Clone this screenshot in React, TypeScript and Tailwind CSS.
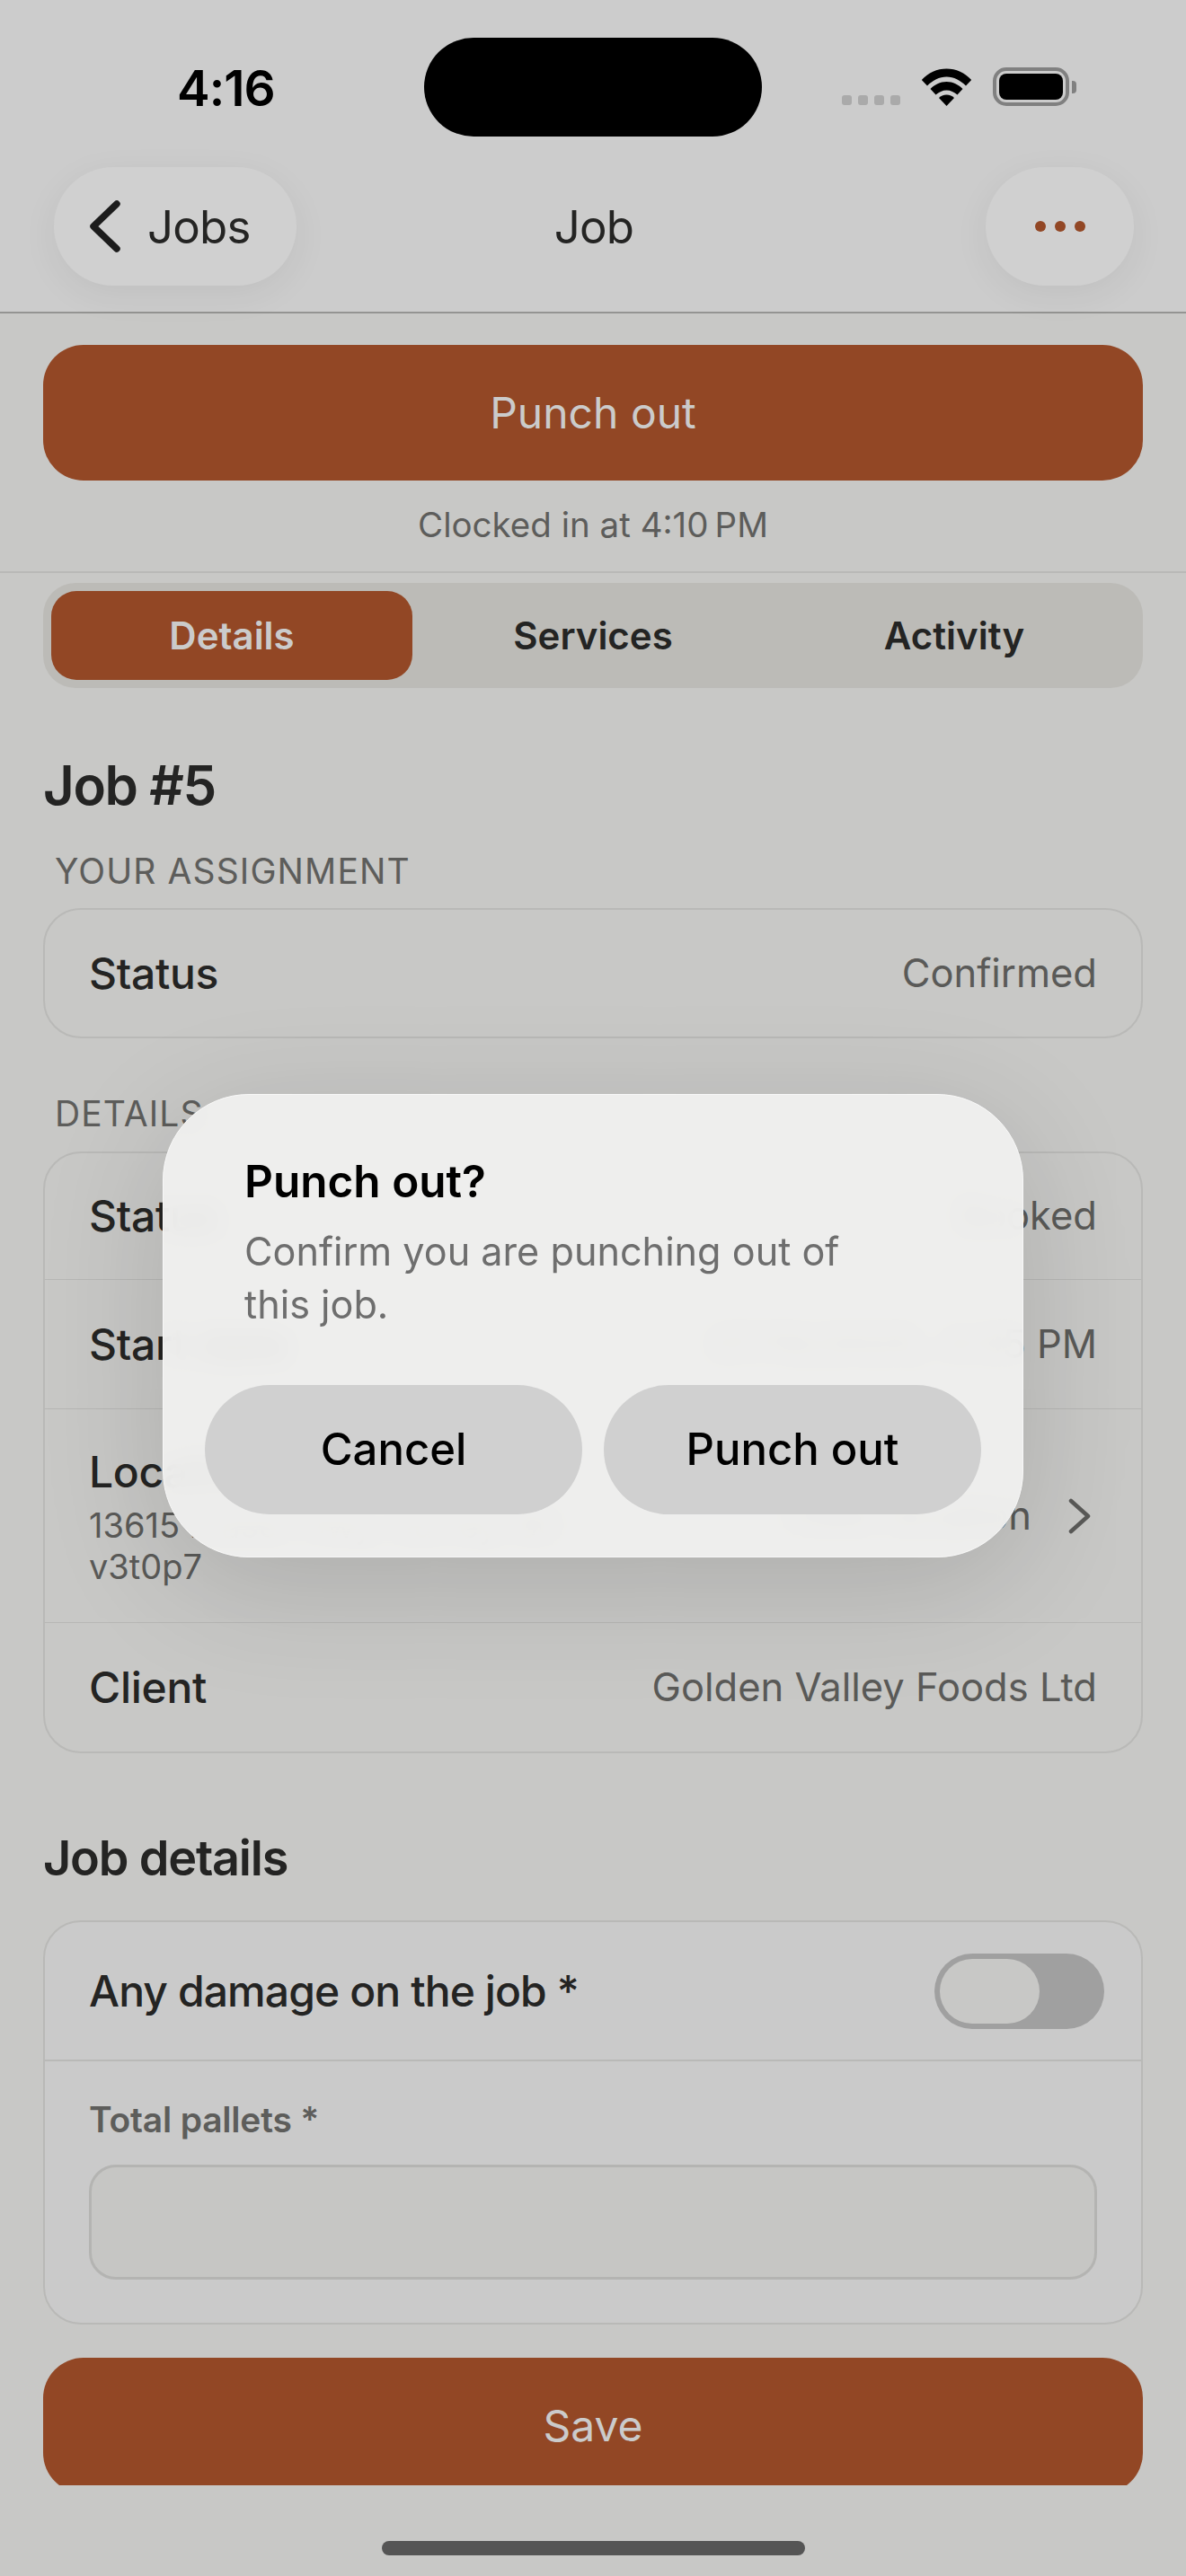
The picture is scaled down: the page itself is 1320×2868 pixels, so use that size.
const font = "font-['Inter','Noto_Sans',sans-serif]";

function StatusBar() {
  return (
    <div className="flex items-start pt-[42px] h-[186px]">
      <div className="w-[472px] pl-[197px] pt-[28px] text-[55px] leading-[56px] font-semibold text-black tracking-[-1px]">4:16</div>
      <div className="w-[376px] h-[110px] rounded-full bg-black" />
      <div className="flex items-end pl-[89px] pt-[33px]">
        <div className="flex gap-[7px] mb-[1px]">
          <div className="w-[11px] h-[11px] rounded-[3px] bg-[#aaaaaa]" />
          <div className="w-[11px] h-[11px] rounded-[3px] bg-[#aaaaaa]" />
          <div className="w-[11px] h-[11px] rounded-[3px] bg-[#aaaaaa]" />
          <div className="w-[11px] h-[11px] rounded-[3px] bg-[#aaaaaa]" />
        </div>
        <svg className="ml-[23px]" width="57" height="42" viewBox="0 0 57 42" fill="#000">
          <path d="M0.8 13 C8 5 18 0.5 28.5 0.5 C39 0.5 49 5 56.2 13 L50 19.5 C44 13.5 36.5 9.5 28.5 9.5 C20.5 9.5 13 13.5 7 19.5 Z" />
          <path d="M10.5 23 C15 18.5 21.5 15 28.5 15 C35.5 15 42 18.5 46.5 23 L40.5 29.5 C37 26.5 33 24.5 28.5 24.5 C24 24.5 20 26.5 16.5 29.5 Z" />
          <path d="M20 33 C22 31 25 29.5 28.5 29.5 C32 29.5 35 31 37 33 L28.5 42 Z" />
        </svg>
        <div className="ml-[23px] flex items-center">
          <div className="w-[85px] h-[43px] rounded-[15px] border-[4px] border-[#808080] p-[3px]">
            <div className="w-full h-full rounded-[8px] bg-black" />
          </div>
          <div className="w-[5px] h-[14px] ml-[3px] rounded-r-[4px] bg-[#808080]" />
        </div>
      </div>
    </div>
  );
}

function NavBar() {
  return (
    <div className="grid grid-cols-[1fr_auto_1fr] items-center pl-[60px] pr-[58px] h-[132px]">
      <div className="h-[132px] w-[270px] rounded-full bg-[#d0d0d0] shadow-[0_10px_40px_rgba(0,0,0,0.06)] flex items-center pl-[39px] gap-[29px]">
        <svg width="36" height="58" viewBox="0 0 36 58" fill="none" stroke="#1c1c1c" strokeWidth="7.5" strokeLinecap="round" strokeLinejoin="round">
          <path d="M31 4 L5 29 L31 54" />
        </svg>
        <span className="pt-[2px] text-[51px] tracking-[-0.8px] text-[#242423]">Jobs</span>
      </div>
      <span className="pt-[2px] text-[51px] tracking-[-0.8px] text-[#242423]">Job</span>
      <div className="justify-self-end h-[132px] w-[165px] rounded-full bg-[#d0d0d0] shadow-[0_10px_40px_rgba(0,0,0,0.06)] flex items-center justify-center gap-[10px]">
        <div className="w-[12px] h-[12px] rounded-full bg-[#924725]" />
        <div className="w-[12px] h-[12px] rounded-full bg-[#924725]" />
        <div className="w-[12px] h-[12px] rounded-full bg-[#924725]" />
      </div>
    </div>
  );
}

function Row({ label, value, h }: { label: string; value: string; h: string }) {
  return (
    <div className={`flex items-center justify-between px-[49px] border-b border-[#b7b7b5] last:border-b-0 ${h}`}>
      <span className="text-[48px] font-[450] tracking-[-0.3px] text-[#242423]">{label}</span>
      <span className="text-[43.5px] text-[#5a5a58]">{value}</span>
    </div>
  );
}

function PrimaryButton({ label, className }: { label: string; className: string }) {
  return <div className={`flex items-center justify-center bg-[#924725] text-[#cbcbcb] text-[48px] ${className}`}>{label}</div>;
}

function ConfirmDialog() {
  return (
    <div className="absolute left-[181px] top-[1218px] w-[958px] h-[516px] rounded-[96px] bg-[#f0f0eff0] backdrop-blur-[14px] border border-[#f8f8f8] shadow-[0_30px_140px_rgba(0,0,0,0.14)] pt-[65px] px-[46px]">
      <div className="pl-[44px]">
        <div className="text-[49.5px] leading-[62px] font-semibold text-black">Punch out?</div>
        <div className="mt-[18px] w-[720px] text-[43.2px] leading-[59px] text-[#6e6e6e]">Confirm you are punching out of this job.</div>
      </div>
      <div className="mt-[60px] flex gap-[24px]">
        <div className="flex-1 h-[144px] rounded-full bg-[#d0d0d0] flex items-center justify-center text-[49px] font-medium text-black">Cancel</div>
        <div className="flex-1 h-[144px] rounded-full bg-[#d0d0d0] flex items-center justify-center text-[49px] font-medium text-black">Punch out</div>
      </div>
    </div>
  );
}

export default function App() {
  return (
    <div className={`relative w-[1320px] h-[2868px] overflow-hidden bg-[#c8c8c6] ${font}`}>
      <div className="h-[349px] bg-[#cccccc] border-b-2 border-[#949492]">
        <StatusBar />
        <NavBar />
      </div>

      <div className="h-[2418px] overflow-hidden">
        {/* punch */}
        <div className="border-b-2 border-[#b9b9b7] h-[289px] px-[48px] pt-[35px]">
          <PrimaryButton label="Punch out" className="h-[151px] rounded-[45px]" />
          <div className="mt-[24px] text-center text-[38.5px] leading-[50px] text-[#5d5d5b]">Clocked in at 4:10{"\u2009"}PM</div>
        </div>

        <div className="px-[48px] pt-[11px]">
          {/* tabs */}
          <div className="h-[117px] rounded-[36px] bg-[#bcbbb7] p-[9px] grid grid-cols-3">
            <div className="rounded-[28px] bg-[#924725] flex items-center justify-center text-[42px] font-semibold text-[#cbcbcb]">Details</div>
            <div className="flex items-center justify-center text-[42px] font-semibold text-[#242423]">Services</div>
            <div className="flex items-center justify-center text-[42px] font-semibold text-[#242423]">Activity</div>
          </div>

          <h2 className="mt-[70px] text-[60px] leading-[76px] font-semibold tracking-[-1.4px] text-[#242423]">Job #5</h2>
          <div className="mt-[34px] pl-[13px] text-[39px] leading-[48px] tracking-[1.1px] text-[#5d5d5b]">YOUR ASSIGNMENT</div>
          <div className="mt-[17px] rounded-[42px] border-2 border-[#b9b9b7]">
            <Row label="Status" value="Confirmed" h="h-[141px]" />
          </div>

          <div className="mt-[60px] pl-[13px] text-[39px] leading-[48px] tracking-[1.1px] text-[#5d5d5b]">DETAILS</div>
          <div className="mt-[18px] rounded-[42px] border-2 border-[#b9b9b7]">
            <Row label="Status" value="Booked" h="h-[141px]" />
            <Row label="Start date" value="07/10/2025, 4:05 PM" h="h-[144px]" />
            <div className="flex items-center justify-between pl-[49px] pr-[56px] h-[238px] border-b border-[#b7b7b5]">
              <div className="w-[600px]">
                <div className="text-[48px] leading-[60px] font-[450] tracking-[-0.3px] text-[#242423]">Location</div>
                <div className="mt-[6px] text-[38px] leading-[46px] text-[#5a5a58]">13615 Fraser Hwy, Surrey, BC v3t0p7</div>
              </div>
              <div className="flex items-center gap-[41px] text-[43.5px] text-[#5a5a58]">
                <span>View location</span>
                <svg width="25" height="40" viewBox="0 0 25 40" fill="none" stroke="#5a5a58" strokeWidth="4.5" strokeLinecap="round" strokeLinejoin="round">
                  <path d="M3 3 L22 20 L3 37" />
                </svg>
              </div>
            </div>
            <Row label="Client" value="Golden Valley Foods Ltd" h="h-[143px]" />
          </div>

          <h2 className="mt-[79px] text-[54px] leading-[76px] font-semibold tracking-[-1.2px] text-[#242423]">Job details</h2>
          <div className="mt-[31px] rounded-[42px] border-2 border-[#b9b9b7] bg-[#cacaca]">
            <div className="h-[155px] flex items-center justify-between pl-[49px] pr-[41px] border-b-2 border-[#b9b9b7]">
              <span className="text-[48px] font-[450] tracking-[-0.9px] text-[#242423]">Any damage on the job *</span>
              <div className="w-[189px] h-[84px] rounded-full bg-[#a0a0a0] p-[6px] pr-[72px]">
                <div className="w-full h-full rounded-full bg-[#c8c8c6]" />
              </div>
            </div>
            <div className="px-[49px] pt-[41px] pb-[48px]">
              <div className="text-[39px] leading-[48px] font-semibold tracking-[-0.2px] text-[#5d5d5b]">Total pallets *</div>
              <div className="mt-[26px] h-[128px] rounded-[30px] border-[3px] border-[#b4b4b2] bg-[#c6c6c4]" />
            </div>
          </div>

          <PrimaryButton label="Save" className="mt-[37px] h-[151px] rounded-[45px]" />
        </div>
      </div>

      <div className="flex justify-center pt-[62px]">
        <div className="w-[471px] h-[16px] rounded-full bg-[#555555]" />
      </div>

      <ConfirmDialog />
    </div>
  );
}
